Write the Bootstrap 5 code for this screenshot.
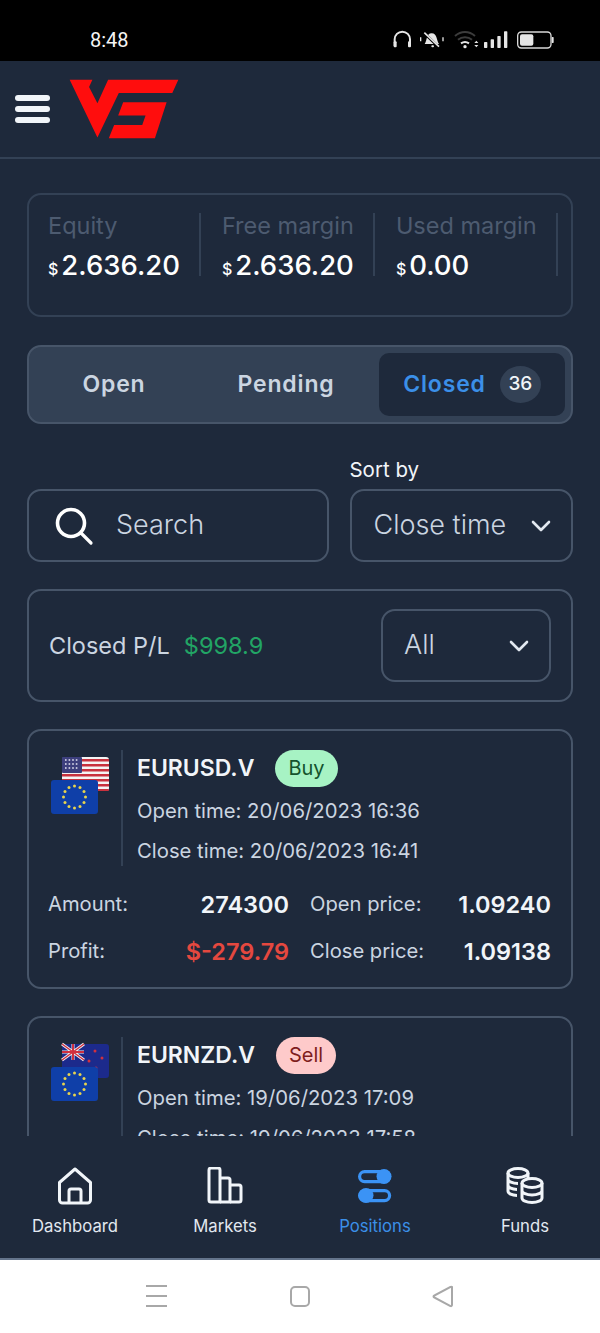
<!DOCTYPE html>
<html lang="en">
<head>
    <meta charset="UTF-8">
    <meta name="viewport" content="width=device-width, initial-scale=1.0">
    <title>Positions</title>
    <link href="https://cdn.jsdelivr.net/npm/bootstrap@5.3.0/dist/css/bootstrap.min.css" rel="stylesheet">
    <style>
        html, body { height: 1333px; overflow: hidden; }
        body { background: #1e293b; font-family: Inter, "Liberation Sans", sans-serif; color: #f1f5f9; }
        .app-shell { height: 1333px; }
        .status-strip { height: 61px; background: #000; padding: 22px 35px 0 90px; flex: none; }
        .status-time { font-family: Roboto, "Liberation Sans", sans-serif; font-size: 20px; line-height: 36px; color: #f5f5f5; }
        .top-head { height: 98px; flex: none; padding-left: 15px; gap: 18px; border-bottom: 2px solid #334155; }
        .burger { width: 35px; }
        .burger span { display: block; height: 6px; border-radius: 3px; background: #f1f5f9; margin: 5px 0; }
        .scroll-area { min-height: 0; overflow: hidden; padding: 34px 27px 0; }
        .panel { background: transparent; border: 2px solid #475569; border-radius: 14px; color: inherit; }
        .equity-panel { height: 124px; padding: 18px 0 0 19px; border-color: #334155; margin-bottom: 28px; }
        .stat-col { height: 63px; flex: none; padding-right: 19px; margin-right: 21px; border-right: 2px solid #334155; white-space: nowrap; }
        .stat-label { font-size: 23.5px; line-height: 28px; margin-bottom: 7px; margin-top: -1px; color: #4d5b70; }
        .stat-value { font-size: 27.5px; line-height: 36px; font-weight: 500; color: #fff; }
        .stat-value small { font-size: 16px; margin-right: 3px; font-weight: 500; }
        .tab-bar { height: 79px; padding: 6px; background: #334155; border: 2px solid #475569; border-radius: 14px; margin-bottom: 34px; }
        .tab-item { font-size: 23px; font-weight: 600; letter-spacing: .85px; color: #cbd5e1; text-align: center; }
        .tab-open { width: 158px; }
        .tab-pending { width: 186px; }
        .tab-closed { width: 186px; gap: 14px; background: #1e293b; border-radius: 10px; color: #3b8fe8; }
        .count-pill { width: 41px; height: 37px; border-radius: 50%; background: #334155; color: #f1f5f9; font-size: 19px; font-weight: 500; letter-spacing: 0; }
        .filter-row { gap: 21px; margin-bottom: 27px; }
        .search-box { width: 303px; height: 73px; padding: 0 25px; gap: 22px; }
        .search-box input { background: transparent; border: 0; padding: 0; box-shadow: none; font-size: 27px; font-weight: 300; color: #cbd5e1; }
        .search-box input::placeholder { color: #cbd5e1; opacity: 1; }
        .sort-col { width: 223px; }
        .sort-label { font-size: 20.5px; line-height: 24px; margin-bottom: 7px; color: #f1f5f9; margin-left: -1px; }
        .pick-box.form-select { height: 73px; background-color: transparent; border: 2px solid #475569; border-radius: 14px; color: #cbd5e1; font-size: 27px; font-weight: 300; padding: 0 40px 0 21px;
            background-image: url("data:image/svg+xml,%3csvg xmlns='http://www.w3.org/2000/svg' viewBox='0 0 20 12'%3e%3cpath fill='none' stroke='%23e2e8f0' stroke-width='2.6' stroke-linecap='round' stroke-linejoin='round' d='M2 2l8 8 8-8'/%3e%3c/svg%3e");
            background-size: 20px 12px; background-position: right 20px center; }
        .pl-panel { height: 113px; padding: 0 20px 0 20px; margin-bottom: 27px; }
        .pl-label { font-size: 23.5px; color: #cbd5e1; }
        .pl-value { font-size: 23.5px; color: #22a565; margin-left: 14px; }
        .pl-panel .form-select { width: 170px; }
        .trade-panel { padding: 19px 20px 0 19px; height: 260px; margin-bottom: 27px; flex: none; }
        .flag-cell { width: 75px; height: 116px; padding-left: 1px; border-right: 2px solid #334155; flex: none; }
        .trade-info { padding-left: 14px; }
        .trade-name { font-size: 23px; line-height: 37px; font-weight: 600; color: #f1f5f9; }
        .side-pill { height: 37px; padding: 0 13px; margin-left: 21px; border-radius: 19px; font-size: 20px; line-height: 37px; }
        .side-buy { background: #a7f3c4; color: #14532d; }
        .side-sell { background: #fecaca; color: #7f1d1d; }
        .trade-time { font-size: 20.3px; line-height: 40px; color: #cbd5e1; white-space: nowrap; }
        .stats-grid { margin-top: 10px; }
        .stats-line { height: 47px; }
        .stats-name { font-size: 20.2px; color: #cbd5e1; }
        .stats-left { width: 241px; }
        .stats-right { margin-left: 21px; flex: 1; }
        .stats-num { font-size: 23.5px; font-weight: 600; color: #f1f5f9; }
        .stats-loss { color: #e5483f; }
        .bottom-tabs { height: 124px; flex: none; background: #1e293b; border-bottom: 2px solid #64748b; }
        .bottom-tab { width: 150px; padding-top: 31px; font-size: 16.7px; color: #e2e8f0; }
        .bottom-tab svg { display: block; margin-bottom: 9px; }
        .bottom-tab.on { color: #3b8fe8; }
        .sys-bar { height: 73px; flex: none; background: #fff; }
    </style>
</head>
<body>
<div class="app-shell d-flex flex-column">
    <!-- status bar -->
    <div class="status-strip d-flex justify-content-between align-items-start">
        <span class="status-time">8:48</span>
        <svg width="180" height="36" viewBox="0 0 540 108">
            <g fill="none" stroke="#e6e6e6" stroke-width="6">
                <path d="M29 72V52a23 23 0 0 1 46 0v20"/>
                <path d="M119 66c8-10 4-32 21-32s14 22 22 32z" fill="#e6e6e6" stroke="none"/>
                <path d="M118 34l46 44" stroke="#000" stroke-width="8"/>
                <path d="M118 32l44 42" stroke-width="5"/>
                <path d="M107 46v12M174 46v12" stroke-width="4"/>
                <path d="M210 42c18-16 42-16 60 0" stroke="#3c3c3c"/>
                <path d="M219 53c12-10 30-10 42 0" stroke="#3c3c3c"/>
                <path d="M228 64c7-5 17-5 24 0"/>
            </g>
            <g fill="#e6e6e6">
                <rect x="26" y="58" width="9" height="18" rx="3"/>
                <rect x="69" y="58" width="9" height="18" rx="3"/>
                <circle cx="240" cy="74" r="5"/>
                <path d="M268 63l6-7 6 7zM268 69l6 7 6-7z"/>
                <rect x="297" y="60" width="10" height="18" rx="2"/>
                <rect x="317" y="52" width="10" height="26" rx="2"/>
                <rect x="337" y="42" width="10" height="36" rx="2"/>
                <rect x="357" y="28" width="10" height="50" rx="2"/>
                <rect x="405" y="37" width="40" height="34" rx="6"/>
                <rect x="500" y="45" width="6" height="18" rx="2"/>
                <rect x="139" y="70" width="8" height="6" rx="3"/>
            </g>
            <rect x="398" y="30" width="100" height="48" rx="11" fill="none" stroke="#d8d8d8" stroke-width="4"/>
        </svg>
    </div>

    <!-- header -->
    <div class="top-head d-flex align-items-center">
        <div class="burger"><span></span><span></span><span></span></div>
        <svg width="112" height="62" viewBox="40 25 335 185">
            <path fill="#ff0d0d" d="M45 30H113L103 52 128 100 160 30H370L352 70H192L128 203Z"/>
            <path fill="#ff0d0d" d="M205 97H335L300 205H162L178 165H262L272 137H190Z"/>
        </svg>
    </div>

    <div class="scroll-area flex-grow-1 d-flex flex-column">
        <!-- account summary -->
        <div class="card panel equity-panel flex-row flex-shrink-0">
            <div class="stat-col">
                <div class="stat-label">Equity</div>
                <div class="stat-value"><small>$</small>2.636.20</div>
            </div>
            <div class="stat-col">
                <div class="stat-label">Free margin</div>
                <div class="stat-value"><small>$</small>2.636.20</div>
            </div>
            <div class="stat-col">
                <div class="stat-label">Used margin</div>
                <div class="stat-value"><small>$</small>0.00</div>
            </div>
        </div>

        <!-- tabs -->
        <div class="tab-bar d-flex flex-shrink-0">
            <div class="tab-item tab-open d-flex align-items-center justify-content-center">Open</div>
            <div class="tab-item tab-pending d-flex align-items-center justify-content-center">Pending</div>
            <div class="tab-item tab-closed d-flex align-items-center justify-content-center">Closed <span class="count-pill d-flex align-items-center justify-content-center">36</span></div>
        </div>

        <!-- search + sort -->
        <div class="filter-row d-flex align-items-end flex-shrink-0">
            <div class="panel search-box d-flex align-items-center">
                <svg width="40" height="40" viewBox="0 0 40 40" class="flex-shrink-0" fill="none" stroke="#fff" stroke-linecap="round">
                    <circle cx="17" cy="17" r="13.5" stroke-width="3.6"/>
                    <path d="M27 27l10 10" stroke-width="3.2"/>
                </svg>
                <input type="text" class="form-control" placeholder="Search">
            </div>
            <div class="sort-col">
                <div class="sort-label">Sort by</div>
                <select class="form-select pick-box"><option>Close time</option></select>
            </div>
        </div>

        <!-- closed P/L -->
        <div class="card panel pl-panel flex-row align-items-center justify-content-between flex-shrink-0">
            <div><span class="pl-label">Closed P/L</span><span class="pl-value">$998.9</span></div>
            <select class="form-select pick-box"><option>All</option></select>
        </div>

        <!-- trade 1 -->
        <div class="card panel trade-panel">
            <div class="d-flex">
                <div class="flag-cell">
                    <svg width="60" height="66" viewBox="0 0 60 66">
                        <defs>
                            <g id="euStars" fill="#e8d44d">
                                <circle cx="0" cy="-11" r="1.5"/><circle cx="5.5" cy="-9.5" r="1.5"/><circle cx="9.5" cy="-5.5" r="1.5"/><circle cx="11" cy="0" r="1.5"/><circle cx="9.5" cy="5.5" r="1.5"/><circle cx="5.5" cy="9.5" r="1.5"/><circle cx="0" cy="11" r="1.5"/><circle cx="-5.5" cy="9.5" r="1.5"/><circle cx="-9.5" cy="5.5" r="1.5"/><circle cx="-11" cy="0" r="1.5"/><circle cx="-9.5" cy="-5.5" r="1.5"/><circle cx="-5.5" cy="-9.5" r="1.5"/>
                            </g>
                        </defs>
                        <rect x="13" y="7" width="47" height="34" rx="3" fill="#f4f4f4"/>
                        <g fill="#c8313e">
                            <rect x="13" y="9" width="47" height="2.500"/><rect x="13" y="14" width="47" height="2.500"/><rect x="13" y="19" width="47" height="2.500"/><rect x="13" y="24" width="47" height="2.500"/><rect x="13" y="29" width="47" height="2.500"/><rect x="13" y="34" width="47" height="2.500"/><rect x="13" y="39" width="47" height="2" rx="1"/>
                        </g>
                        <rect x="13" y="7" width="20" height="16" rx="1" fill="#3d3f7d"/>
                        <path d="M16 10h14M16 14h14M16 18h14" stroke="#e8e8f4" stroke-width="1.600" stroke-dasharray="1.600 2"/>
                        <rect x="2" y="30" width="47" height="34" rx="3" fill="#0f3fa8"/>
                        <use href="#euStars" x="25.500" y="47"/>
                    </svg>
                </div>
                <div class="trade-info">
                    <div class="d-flex align-items-center"><span class="trade-name">EURUSD.V</span><span class="side-pill side-buy">Buy</span></div>
                    <div class="trade-time mt-1">Open time: 20/06/2023 16:36</div>
                    <div class="trade-time">Close time: 20/06/2023 16:41</div>
                </div>
            </div>
            <div class="stats-grid">
                <div class="stats-line d-flex align-items-center">
                    <div class="stats-left d-flex justify-content-between align-items-center"><span class="stats-name">Amount:</span><span class="stats-num">274300</span></div>
                    <div class="stats-right d-flex justify-content-between align-items-center"><span class="stats-name">Open price:</span><span class="stats-num">1.09240</span></div>
                </div>
                <div class="stats-line d-flex align-items-center">
                    <div class="stats-left d-flex justify-content-between align-items-center"><span class="stats-name">Profit:</span><span class="stats-num stats-loss">$-279.79</span></div>
                    <div class="stats-right d-flex justify-content-between align-items-center"><span class="stats-name">Close price:</span><span class="stats-num">1.09138</span></div>
                </div>
            </div>
        </div>

        <!-- trade 2, cut off by the bottom nav -->
        <div class="card panel trade-panel">
            <div class="d-flex">
                <div class="flag-cell">
                    <svg width="60" height="66" viewBox="0 0 60 66">
                        <rect x="13" y="7" width="47" height="34" rx="3" fill="#1c2a8c"/>
                        <g stroke="#f1f1f1" stroke-width="3"><path d="M13 7l22 16M35 7L13 23M24 7v16M13 15h22"/></g>
                        <g stroke="#d0303f" stroke-width="1.400"><path d="M13 7l22 16M35 7L13 23"/><path d="M24 7v16M13 15h22" stroke-width="2"/></g>
                        <g fill="#d0303f"><circle cx="46" cy="14" r="1.500"/><circle cx="53" cy="21" r="1.500"/><circle cx="40" cy="24" r="1.500"/><circle cx="47" cy="31" r="1.500"/></g>
                        <rect x="2" y="30" width="47" height="34" rx="3" fill="#0f3fa8"/>
                        <use href="#euStars" x="25.500" y="47"/>
                    </svg>
                </div>
                <div class="trade-info">
                    <div class="d-flex align-items-center"><span class="trade-name">EURNZD.V</span><span class="side-pill side-sell">Sell</span></div>
                    <div class="trade-time mt-1">Open time: 19/06/2023 17:09</div>
                    <div class="trade-time">Close time: 19/06/2023 17:58</div>
                </div>
            </div>
        </div>
    </div>

    <!-- bottom nav -->
    <div class="bottom-tabs d-flex">
        <div class="bottom-tab d-flex flex-column align-items-center">
            <svg width="36" height="38" viewBox="0 0 36 38" fill="none" stroke="#f1f5f9" stroke-width="3" stroke-linejoin="round">
                <path d="M2.500 15.500L18 2l15.500 13.500V33a3 3 0 0 1-3 3h-25a3 3 0 0 1-3-3z"/>
                <path d="M12 35V24a2 2 0 0 1 2-2h8a2 2 0 0 1 2 2v11"/>
            </svg>
            Dashboard
        </div>
        <div class="bottom-tab d-flex flex-column align-items-center">
            <svg width="36" height="38" viewBox="0 0 36 38" fill="none" stroke="#f1f5f9" stroke-width="3" stroke-linejoin="round">
                <path d="M2 3a2 2 0 0 1 2-2h7a2 2 0 0 1 2 2v32H4a2 2 0 0 1-2-2z"/>
                <path d="M13 11h8a2 2 0 0 1 2 2v22H13"/>
                <path d="M23 18h9a2 2 0 0 1 2 2v13a2 2 0 0 1-2 2h-9"/>
            </svg>
            Markets
        </div>
        <div class="bottom-tab on d-flex flex-column align-items-center">
            <svg width="36" height="38" viewBox="0 0 36 38" fill="none" stroke="#3b93f5" stroke-width="3.200">
                <rect x="2.600" y="4.600" width="30" height="10" rx="5"/>
                <rect x="2.600" y="23.600" width="30" height="10" rx="5"/>
                <circle cx="27" cy="9.500" r="7.500" fill="#3b93f5" stroke="none"/>
                <circle cx="9" cy="28.500" r="7.500" fill="#3b93f5" stroke="none"/>
            </svg>
            Positions
        </div>
        <div class="bottom-tab d-flex flex-column align-items-center">
            <svg width="38" height="38" viewBox="0 0 38 38" fill="none" stroke="#f1f5f9" stroke-width="3">
                <ellipse cx="12" cy="6" rx="10" ry="4.500"/>
                <path d="M2 6v18c0 2.500 4 4.500 9 4.500M22 6v6M2 12c0 2.500 4.500 4.500 10 4.500M2 18c0 2.500 4 4.500 9 4.500"/>
                <ellipse cx="26" cy="16" rx="10" ry="4.500"/>
                <path d="M16 16v15c0 2.500 4.500 4.500 10 4.500s10-2 10-4.500V16M16 23.500c0 2.500 4.500 4.500 10 4.500s10-2 10-4.500"/>
            </svg>
            Funds
        </div>
    </div>

    <!-- android nav -->
    <div class="sys-bar d-flex justify-content-center align-items-center position-relative">
        <svg width="600" height="73" viewBox="0 0 600 73" fill="none" stroke="#a8a8a8" stroke-width="2">
            <path d="M146 26h21M146 36h21M146 46h21"/>
            <rect x="291" y="27" width="18" height="19" rx="4"/>
            <path d="M452 27v18a1 1 0 0 1-1.500 1L434.500 37.500a1 1 0 0 1 0-2L450.500 27a1 1 0 0 1 1.500 0z"/>
        </svg>
    </div>
</div>
<script src="https://cdn.jsdelivr.net/npm/bootstrap@5.3.0/dist/js/bootstrap.bundle.min.js"></script>
</body>
</html>
